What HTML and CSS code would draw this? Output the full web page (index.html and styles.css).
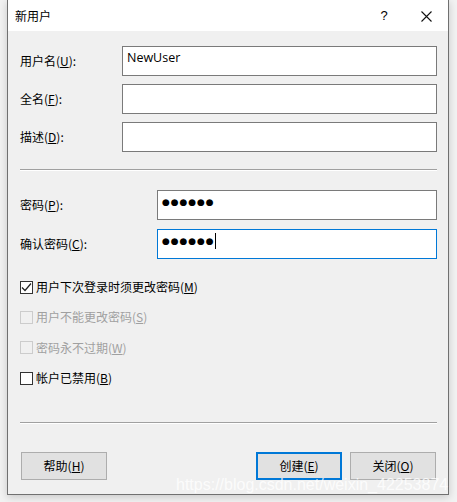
FILE: index.html
```html
<!DOCTYPE html>
<html lang="zh-CN">
<head>
<meta charset="utf-8">
<title>新用户</title>
<link rel="stylesheet" href="styles.css">
</head>
<body>
<div class="window">
  <div class="titlebar">
    <span class="title">新用户</span>
    <span class="help-btn">?</span>
    <span class="close-btn">
      <svg width="11" height="11" viewBox="0 0 11 11"><path d="M0.5 0.5L10.5 10.5M10.5 0.5L0.5 10.5" stroke="#111" stroke-width="1.1" fill="none"/></svg>
    </span>
  </div>
  <div class="content">
    <div class="form-grid grid-a">
      <label class="lbl">用户名(<u>U</u>):</label>
      <div class="field"><span class="val">NewUser</span></div>
      <label class="lbl">全名(<u>F</u>):</label>
      <div class="field"></div>
      <label class="lbl">描述(<u>D</u>):</label>
      <div class="field"></div>
    </div>
    <div class="sep sep-1"></div>
    <div class="form-grid grid-b">
      <label class="lbl">密码(<u>P</u>):</label>
      <div class="field"><span class="dots">●●●●●●</span></div>
      <label class="lbl">确认密码(<u>C</u>):</label>
      <div class="field focused"><span class="dots">●●●●●●</span><span class="caret"></span></div>
    </div>
    <div class="checks">
      <div class="check-row">
        <span class="box">
          <svg width="11" height="11" viewBox="0 0 11 11"><path d="M1 5.5L4 8.5L10 1.5" stroke="#222" stroke-width="1.2" fill="none"/></svg>
        </span>
        <span class="ctext">用户下次登录时须更改密码(<u>M</u>)</span>
      </div>
      <div class="check-row disabled">
        <span class="box"></span>
        <span class="ctext">用户不能更改密码(<u>S</u>)</span>
      </div>
      <div class="check-row disabled">
        <span class="box"></span>
        <span class="ctext">密码永不过期(<u>W</u>)</span>
      </div>
      <div class="check-row">
        <span class="box"></span>
        <span class="ctext">帐户已禁用(<u>B</u>)</span>
      </div>
    </div>
    <div class="sep sep-2"></div>
    <div class="buttons">
      <button class="btn">帮助(<u>H</u>)</button>
      <span class="spacer"></span>
      <button class="btn default">创建(<u>E</u>)</button>
      <button class="btn">关闭(<u>O</u>)</button>
    </div>
  </div>
  <div class="watermark">https://blog.csdn.net/weixin_42253874</div>
</div>
</body>
</html>
```

FILE: styles.css
```css
html, body {
  margin: 0;
  padding: 0;
  background: #f2f2f2;
}
body {
  font-family: "Noto Sans CJK SC", "Noto Sans", sans-serif;
  font-size: 12px;
  color: #000;
  width: 457px;
  height: 502px;
  overflow: hidden;
}
u {
  text-underline-offset: 1px;
}
.window {
  position: relative;
  margin-left: 7px;
  width: 442px;
  height: 495px;
  box-sizing: border-box;
  border: 1px solid #707070;
  border-top: 0;
  background: #f0f0f0;
  box-shadow: 0 2px 8px rgba(0, 0, 0, 0.18);
}
.titlebar {
  height: 31px;
  background: #fff;
  display: flex;
  align-items: center;
  padding-left: 7px;
}
.title {
  font-size: 12px;
  line-height: 1;
}
.help-btn {
  margin-left: auto;
  font-family: "Liberation Sans", sans-serif;
  font-size: 13px;
  width: 12px;
  margin-right: 31px;
  text-align: center;
}
.close-btn {
  display: flex;
  width: 11px;
  height: 11px;
  margin-right: 16px;
  margin-top: 1px;
}
.content {
  padding: 15px 11px 0 12px;
}
.form-grid {
  display: grid;
  align-items: center;
}
.grid-a {
  grid-template-columns: 102px 1fr;
  grid-auto-rows: 30px;
  row-gap: 8px;
}
.grid-b {
  grid-template-columns: 137px 1fr;
  grid-auto-rows: 30px;
  row-gap: 9px;
  margin-top: 19px;
}
.lbl {
  line-height: 1;
  white-space: nowrap;
}
.field {
  height: 30px;
  box-sizing: border-box;
  border: 1px solid #7a7a7a;
  background: #fff;
  display: flex;
  align-items: flex-start;
  padding: 3px 4px 0 4px;
}
.field.focused {
  border-color: #0078d7;
}
.val {
  font-family: "Open Sans", "Noto Sans", sans-serif;
  font-size: 12.5px;
  line-height: 16px;
  color: #000;
}
.dots {
  font-family: "DejaVu Sans", sans-serif;
  font-size: 9px;
  letter-spacing: 0.9px;
  line-height: 17px;
  color: #000;
}
.caret {
  display: inline-block;
  width: 1px;
  height: 16px;
  background: #000;
}
.sep {
  height: 1px;
  background: #a0a0a0;
  border-bottom: 1px solid #fff;
}
.sep-1 {
  margin-top: 17px;
}
.checks {
  margin-top: 13px;
  display: flex;
  flex-direction: column;
}
.check-row {
  height: 30.3px;
  display: flex;
  align-items: center;
}
.box {
  width: 13px;
  height: 13px;
  box-sizing: border-box;
  border: 1px solid #333;
  background: #fff;
  display: flex;
  align-items: center;
  justify-content: center;
  margin-right: 3px;
}
.ctext {
  line-height: 1;
}
.check-row.disabled .box {
  border-color: #cccccc;
  background: #f0f0f0;
}
.check-row.disabled .ctext {
  color: #a0a0a0;
}
.sep-2 {
  margin-top: 29px;
}
.buttons {
  margin-top: 28px;
  display: flex;
  gap: 8px;
  padding-left: 1px;
  padding-right: 1px;
}
.spacer {
  flex: 1;
}
.btn {
  width: 86px;
  height: 28px;
  box-sizing: border-box;
  border: 1px solid #adadad;
  background: #e1e1e1;
  font-family: "Noto Sans CJK SC", "Noto Sans", sans-serif;
  font-size: 12px;
  color: #000;
  padding: 0;
  line-height: 1;
}
.btn.default {
  border: 2px solid #0078d7;
}
.watermark {
  position: absolute;
  left: 168px;
  top: 476px;
  font-family: "Liberation Sans", sans-serif;
  font-size: 16px;
  color: rgba(255, 255, 255, 0.8);
  white-space: nowrap;
}
```
